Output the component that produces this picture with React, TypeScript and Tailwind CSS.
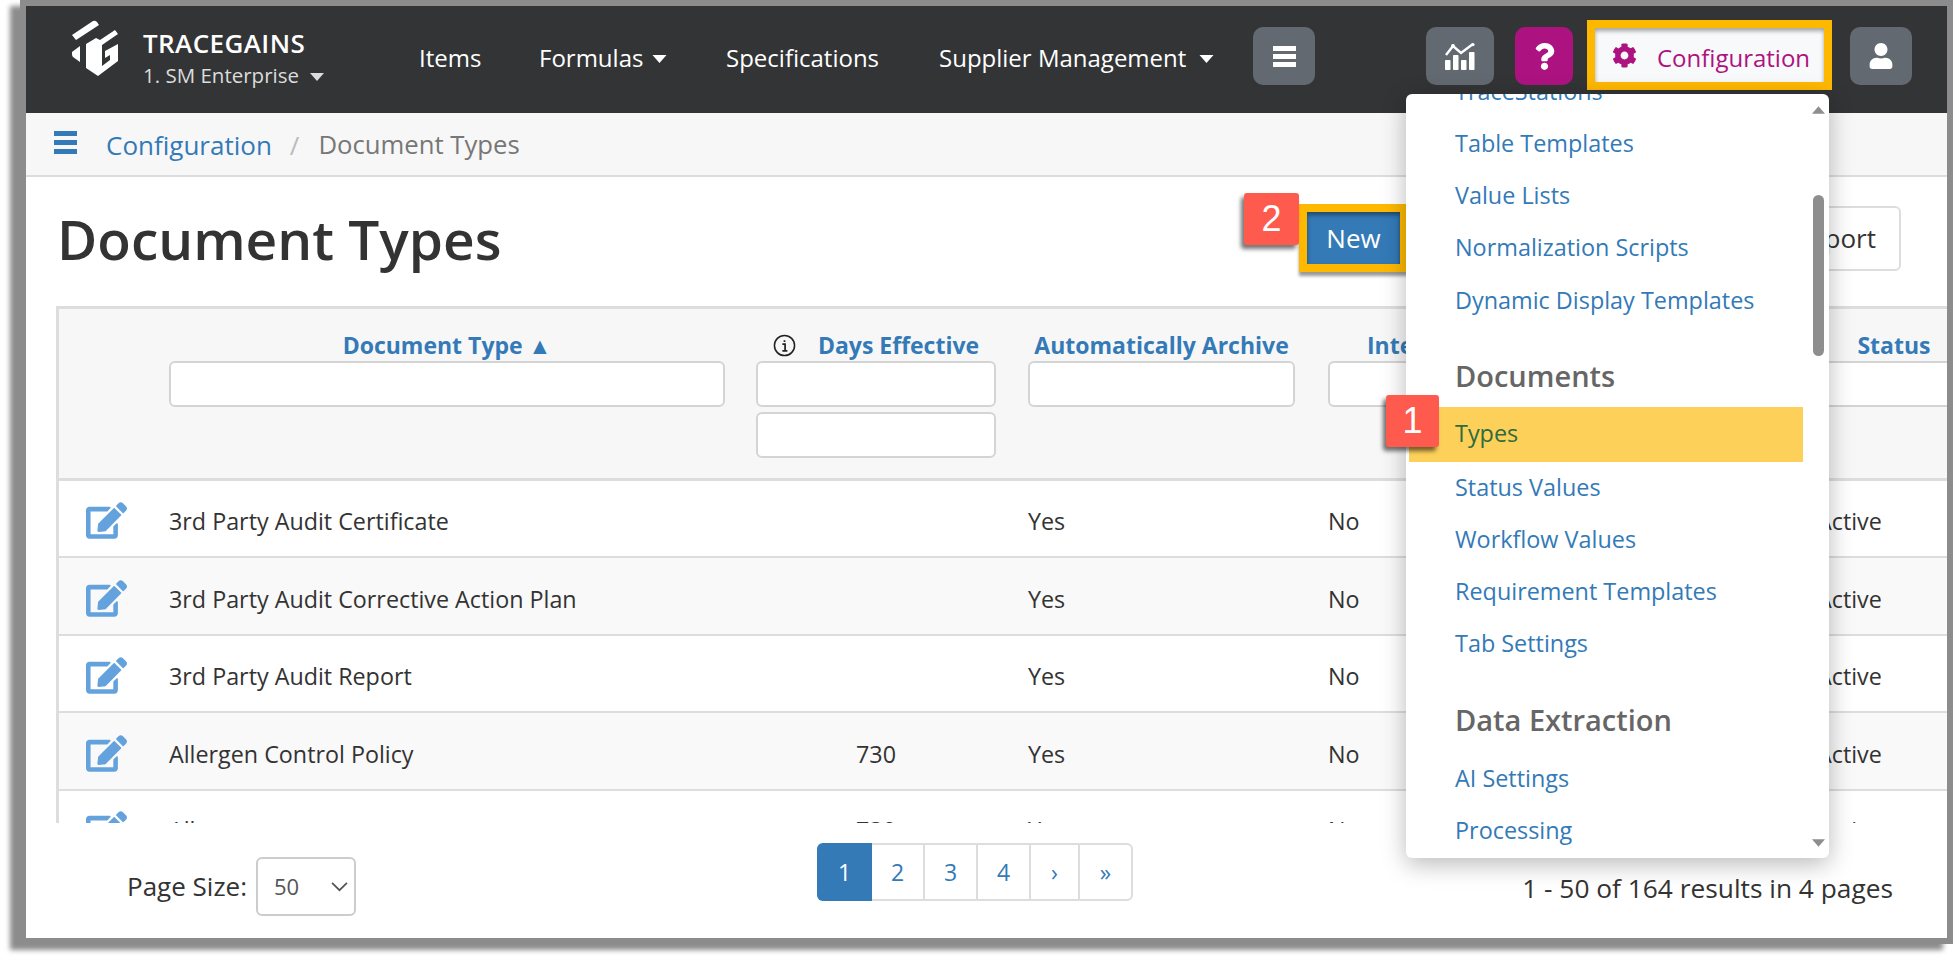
import React from "react";
import { FaEdit, FaCog, FaQuestion, FaUser } from "react-icons/fa";

const rows = [
  { name: "3rd Party Audit Certificate", days: "", h: "h-[77px] pt-[6px]", bg: "bg-white" },
  { name: "3rd Party Audit Corrective Action Plan", days: "", h: "h-[78px] pt-[6px]", bg: "bg-[#f9f9f9]" },
  { name: "3rd Party Audit Report", days: "", h: "h-[77px] pt-[6px]", bg: "bg-white" },
  { name: "Allergen Control Policy", days: "730", h: "h-[78px] pt-[6px]", bg: "bg-[#f9f9f9]" },
  { name: "Allergens", days: "730", h: "h-[78px] pt-[3px]", bg: "bg-white" },
];

function Caret({ color, cls }: { color: string; cls: string }) {
  return (
    <svg viewBox="0 0 14 8" className={cls} fill={color}>
      <path d="M0 0h14L7 8z" />
    </svg>
  );
}

function Logo() {
  return (
    <svg viewBox="0 0 120 70" className="w-[120px] h-[70px] shrink-0 -ml-[10px] -mt-[9px]" fill="#fff">
      <path d="M12 24 L33 10 Q35 9 37 11 L39 14 L16 29 Z" />
      <path d="M20 35 L20 51 L13 46 Q12 45 12 43 L12 41 Z" />
      <path d="M26 33 L36 27 L40 29 L55 19 L58 23 L42 34 L42 55 L50 49 L50 44 L45 47 L45 40 L58 33 L58 50 L38 65 L26 57 Z" />
    </svg>
  );
}

function ChartIcon() {
  return (
    <svg viewBox="0 0 30 27" className="w-[30px] h-[27px]" fill="#fff">
      <rect x="0" y="17" width="5.5" height="10" rx="0.8" />
      <rect x="8" y="12" width="5.5" height="15" rx="0.8" />
      <rect x="16" y="17" width="5.5" height="10" rx="0.8" />
      <rect x="24" y="9" width="5.5" height="18" rx="0.8" />
      <path d="M1 12 L8 3 L16 10 L28 1" fill="none" stroke="#fff" strokeWidth="2.4" />
      <circle cx="8" cy="3" r="2" />
      <circle cx="28" cy="1.6" r="1.6" />
    </svg>
  );
}

const NavBtn = ({ children, cls }: { children: React.ReactNode; cls: string }) => (
  <div className={`mt-[21px] h-[58px] rounded-[10px] flex items-center justify-center shrink-0 ${cls}`}>{children}</div>
);

const FilterInput = ({ cls }: { cls: string }) => (
  <div className={`h-[46px] rounded-[6px] border-2 border-[#d4d4d4] bg-white ${cls}`} />
);

const MenuLink = ({ label }: { label: string }) => (
  <div className="h-[52.3px] pl-[49px] flex items-center text-[#337ab7]">{label}</div>
);

export default function App() {
  return (
    <div className="w-[1953px] h-[964px] bg-white overflow-hidden font-['Open_Sans',sans-serif] text-[#333] pl-[20px]">
      <div className="w-[1933px] h-[944px] border-[6px] border-[#8c8c8c] shadow-[-10px_6px_5px_rgba(0,0,0,0.45)] bg-white relative">
        {/* navbar */}
        <div className="h-[107px] bg-[#333436] flex items-start text-white text-[24px]">
          <div className="ml-[44px] w-[48px] h-[70px] shrink-0 mt-[14px]">
            <Logo />
          </div>
          <div className="ml-[25px] w-[181px] shrink-0 mt-[20px]">
            <div className="text-[26px] leading-[34px] font-semibold tracking-[0.4px] whitespace-nowrap">TRACEGAINS</div>
            <div className="text-[20.5px] leading-[30px] text-[#dcdcdc] flex items-center whitespace-nowrap">
              1. SM Enterprise
              <Caret color="#dcdcdc" cls="w-[14px] h-[8px] ml-auto mt-[3px]" />
            </div>
          </div>
          <div className="ml-[95px] w-[60px] shrink-0 leading-[104px]">Items</div>
          <div className="ml-[60px] w-[128px] shrink-0 flex items-center h-[104px] whitespace-nowrap">
            Formulas
            <Caret color="#fff" cls="w-[15px] h-[8px] ml-auto mt-[2px]" />
          </div>
          <div className="ml-[59px] w-[153px] shrink-0 leading-[104px] whitespace-nowrap">Specifications</div>
          <div className="ml-[60px] w-[275px] shrink-0 flex items-center h-[104px] whitespace-nowrap">
            Supplier Management
            <Caret color="#fff" cls="w-[15px] h-[8px] ml-auto mt-[2px]" />
          </div>
          <NavBtn cls="ml-[39px] w-[62px] bg-[#626970]">
            <div className="flex flex-col gap-[3px] w-[23px]">
              <div className="h-[5px] bg-white" />
              <div className="h-[5px] bg-white" />
              <div className="h-[5px] bg-white" />
            </div>
          </NavBtn>
          <NavBtn cls="ml-[111px] w-[68px] bg-[#626970]">
            <ChartIcon />
          </NavBtn>
          <NavBtn cls="ml-[21px] w-[58px] bg-[#ad1380]">
            <FaQuestion className="text-white text-[27px]" />
          </NavBtn>
          <div className="ml-[14px] mt-[14px] w-[245px] h-[70px] border-[8px] border-[#ffb800] bg-[#f8f9fa] shadow-[inset_0_3px_4px_rgba(0,0,0,0.35)] flex items-center text-[#ad1380] shrink-0">
            <FaCog className="ml-[17px] text-[25px] shrink-0" />
            <span className="ml-[20px] mt-[6px] whitespace-nowrap">Configuration</span>
          </div>
          <NavBtn cls="ml-[18px] w-[62px] bg-[#626970]">
            <FaUser className="text-white text-[26px]" />
          </NavBtn>
        </div>

        {/* breadcrumb */}
        <div className="h-[64px] bg-[#f7f7f7] border-b-2 border-[#ddd] flex items-center text-[26px] pt-[2px]">
          <div className="ml-[28px] flex flex-col gap-[4px] w-[23px] shrink-0 -mt-[6px]">
            <div className="h-[5px] bg-[#337ab7]" />
            <div className="h-[5px] bg-[#337ab7]" />
            <div className="h-[5px] bg-[#337ab7]" />
          </div>
          <span className="ml-[29px] text-[#337ab7]">Configuration</span>
          <span className="ml-[18px] text-[#bbb]">/</span>
          <span className="ml-[19px] text-[25.7px] text-[#777]">Document Types</span>
        </div>

        {/* title row */}
        <div className="h-[129px] flex items-start">
          <h1 className="ml-[31px] mt-[22px] text-[55px] leading-[80px] font-semibold whitespace-nowrap text-[#333]">Document Types</h1>
          <div className="ml-auto mr-[46px] mt-[27px] flex items-center">
            <div className="w-[109px] h-[68px] border-[8px] border-[#ffb800] bg-[#337ab7] shadow-[inset_0_3px_4px_rgba(0,0,0,0.4),0_4px_3px_rgba(0,0,0,0.4)] flex items-center justify-center text-white text-[26px]">
              New
            </div>
            <div className="ml-[371px] h-[65px] w-[122px] rounded-[6px] border-2 border-[#ddd] bg-white flex items-center justify-end pr-[23px] text-[26px]">
              Export
            </div>
          </div>
        </div>

        {/* table */}
        <div className="ml-[30px] h-[517px] overflow-hidden border-l-[3px] border-t-[3px] border-[#ddd] text-[23.3px]">
          <div className="h-[172px] bg-[#f7f7f7] border-b-[3px] border-[#ddd] flex items-start text-[23px]">
            <div className="w-[110px] shrink-0" />
            <div className="w-[587px] shrink-0 pt-[21px]">
              <div className="w-[556px] text-center leading-[30px] font-bold text-[#337ab7] whitespace-nowrap">Document Type ▲</div>
              <FilterInput cls="w-[556px] mt-[1px]" />
            </div>
            <div className="w-[272px] shrink-0 pt-[21px]">
              <div className="w-[240px] flex items-center justify-center leading-[30px] font-bold text-[#337ab7] whitespace-nowrap">
                <svg viewBox="0 0 24 24" className="w-[23px] h-[23px] mr-[22px]" fill="none" stroke="#222" strokeWidth="1.6">
                  <circle cx="12" cy="12" r="10.5" />
                  <path d="M12 6.5v1.8M9.8 10.5H12.6V17M9.8 17.5H15" strokeWidth="1.8" />
                </svg>
                Days Effective
              </div>
              <FilterInput cls="w-[240px] mt-[1px]" />
              <FilterInput cls="w-[240px] mt-[5px]" />
            </div>
            <div className="w-[300px] shrink-0 pt-[21px]">
              <div className="w-[267px] text-center leading-[30px] font-bold text-[#337ab7] whitespace-nowrap">Automatically Archive</div>
              <FilterInput cls="w-[267px] mt-[1px]" />
            </div>
            <div className="w-[489px] shrink-0 pt-[21px]">
              <div className="w-[80px] ml-[39px] text-left leading-[30px] font-bold text-[#337ab7] whitespace-nowrap">Internal</div>
              <FilterInput cls="w-[459px] mt-[1px]" />
            </div>
            <div className="grow min-w-0 pt-[21px] overflow-hidden">
              <div className="w-[154px] text-center leading-[30px] font-bold text-[#337ab7]">Status</div>
              <FilterInput cls="w-[154px] mt-[1px]" />
            </div>
          </div>
          {rows.map((r, i) => (
            <div key={i} className={`${r.h} ${r.bg} border-b-2 border-[#ddd] flex items-center`}>
              <div className="w-[110px] shrink-0 pl-[27px] -mt-[2px]">
                <FaEdit className="text-[41px] text-[#63a2dc]" />
              </div>
              <div className="w-[587px] shrink-0 whitespace-nowrap">{r.name}</div>
              <div className="w-[272px] shrink-0 pr-[32px] text-center">{r.days}</div>
              <div className="w-[300px] shrink-0">Yes</div>
              <div className="w-[489px] shrink-0">No</div>
              <div>Active</div>
            </div>
          ))}
        </div>

        {/* footer */}
        <div className="h-[115px] flex items-start text-[26px]">
          <div className="ml-[101px] mt-[34px] flex items-center w-[229px] shrink-0">
            <span className="whitespace-nowrap">Page Size:</span>
            <div className="ml-auto w-[100px] h-[59px] rounded-[6px] border-2 border-[#ccc] flex items-center pl-[16px] pr-[6px] text-[22px] text-[#555]">
              50
              <svg viewBox="0 0 16 10" className="ml-auto w-[17px] h-[11px]" fill="none" stroke="#555" strokeWidth="1.6">
                <path d="M1 1.5 L8 8.5 L15 1.5" />
              </svg>
            </div>
          </div>
          <div className="ml-[461px] mt-[20px] h-[58px] w-[316px] flex rounded-[6px] border-2 border-[#ddd] text-[#337ab7] text-[23px]">
            <div className="w-[55px] -m-[2px] rounded-l-[6px] bg-[#337ab7] text-white flex items-center justify-center">1</div>
            <div className="w-[53px] ml-[2px] border-r-2 border-[#ddd] flex items-center justify-center">2</div>
            <div className="w-[53px] border-r-2 border-[#ddd] flex items-center justify-center">3</div>
            <div className="w-[53px] border-r-2 border-[#ddd] flex items-center justify-center">4</div>
            <div className="w-[49px] border-r-2 border-[#ddd] flex items-center justify-center">›</div>
            <div className="grow flex items-center justify-center">»</div>
          </div>
          <div className="ml-auto mr-[54px] mt-[46px] whitespace-nowrap text-[26.3px]">1 - 50 of 164 results in 4 pages</div>
        </div>

        {/* dropdown */}
        <div className="absolute left-[1380px] top-[88px] w-[423px] h-[764px] bg-white rounded-[6px] overflow-hidden shadow-[0_6px_24px_rgba(0,0,0,0.28)] text-[23.4px]">
          <div className="-mt-[29px]">
            <MenuLink label="TraceStations" />
            <MenuLink label="Table Templates" />
            <MenuLink label="Value Lists" />
            <MenuLink label="Normalization Scripts" />
            <MenuLink label="Dynamic Display Templates" />
            <div className="h-[81px] pl-[49px] pt-[31px] text-[29px] leading-[38px] font-semibold text-[#666]">Documents</div>
            <div className="h-[55px] -mb-[1.5px] ml-[3px] mr-[26px] pl-[46px] pb-[2px] flex items-center bg-[#fdd05a] text-[#2e6b3e]">Types</div>
            <MenuLink label="Status Values" />
            <MenuLink label="Workflow Values" />
            <MenuLink label="Requirement Templates" />
            <MenuLink label="Tab Settings" />
            <div className="h-[82px] pl-[49px] pt-[31px] text-[29px] leading-[38px] font-semibold text-[#666]">Data Extraction</div>
            <MenuLink label="AI Settings" />
            <MenuLink label="Processing" />
          </div>
          <div className="absolute left-[407px] top-[101px] w-[11px] h-[161px] rounded-full bg-[#8e8e8e]" />
          <Caret color="#8e8e8e" cls="absolute left-[406px] top-[11px] w-[13px] h-[10px] rotate-180" />
          <Caret color="#8e8e8e" cls="absolute left-[406px] top-[744px] w-[13px] h-[10px]" />
        </div>

        {/* numbered badges */}
        <div className="absolute left-[1218px] top-[187px] w-[55px] h-[52px] rounded-[3px] bg-[#ff5a4e] text-white font-['Liberation_Sans',sans-serif] text-[36px] flex items-center justify-center shadow-[-3px_4px_4px_rgba(0,0,0,0.55)]">2</div>
        <div className="absolute left-[1360px] top-[389px] w-[53px] h-[52px] rounded-[3px] bg-[#ff5a4e] text-white font-['Liberation_Sans',sans-serif] text-[36px] flex items-center justify-center shadow-[-3px_4px_4px_rgba(0,0,0,0.55)]">1</div>
      </div>
    </div>
  );
}
